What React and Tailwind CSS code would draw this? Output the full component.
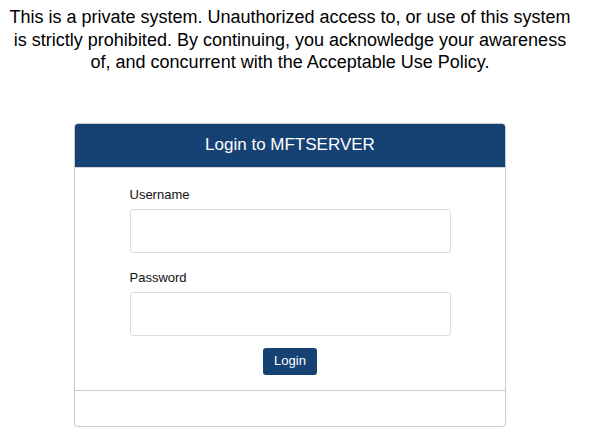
export default function App() {
  return (
    <div className="w-[580px] bg-white" style={{ fontFamily: '"Liberation Sans", Arial, sans-serif' }}>
      <p className="pt-[6px] text-center text-[18px] leading-[22.5px] text-black px-[8px]">
        This is a private system. Unauthorized access to, or use of this system is strictly prohibited. By continuing, you acknowledge your awareness of, and concurrent with the Acceptable Use Policy.
      </p>
      <div className="mx-auto mt-[49px] w-[432px] rounded-[4px] border border-[#cccccc] shadow-[0_1px_1px_rgba(0,0,0,0.1)]">
        <div className="flex h-[44px] items-center justify-center rounded-t-[3px] border-b border-[#d5d5d5] bg-[#154273] text-[17px] text-white">
          Login to MFTSERVER
        </div>
        <div className="pt-[19px] pb-[15px]">
          <div className="mx-auto w-[321px]">
            <label className="mb-[7px] block text-[13px] leading-[15px] text-[#111]">Username</label>
            <div className="h-[44px] rounded-[3px] border border-[#dddddd] bg-white"></div>
            <label className="mt-[17px] mb-[7px] block text-[13px] leading-[15px] text-[#111]">Password</label>
            <div className="h-[44px] rounded-[3px] border border-[#dddddd] bg-white"></div>
            <div className="mt-[12px] flex justify-center">
              <button className="h-[27px] w-[54px] rounded-[3px] bg-[#154273] text-[13px] text-white">Login</button>
            </div>
          </div>
        </div>
        <div className="h-[36px] border-t border-[#cccccc]"></div>
      </div>
    </div>
  );
}
